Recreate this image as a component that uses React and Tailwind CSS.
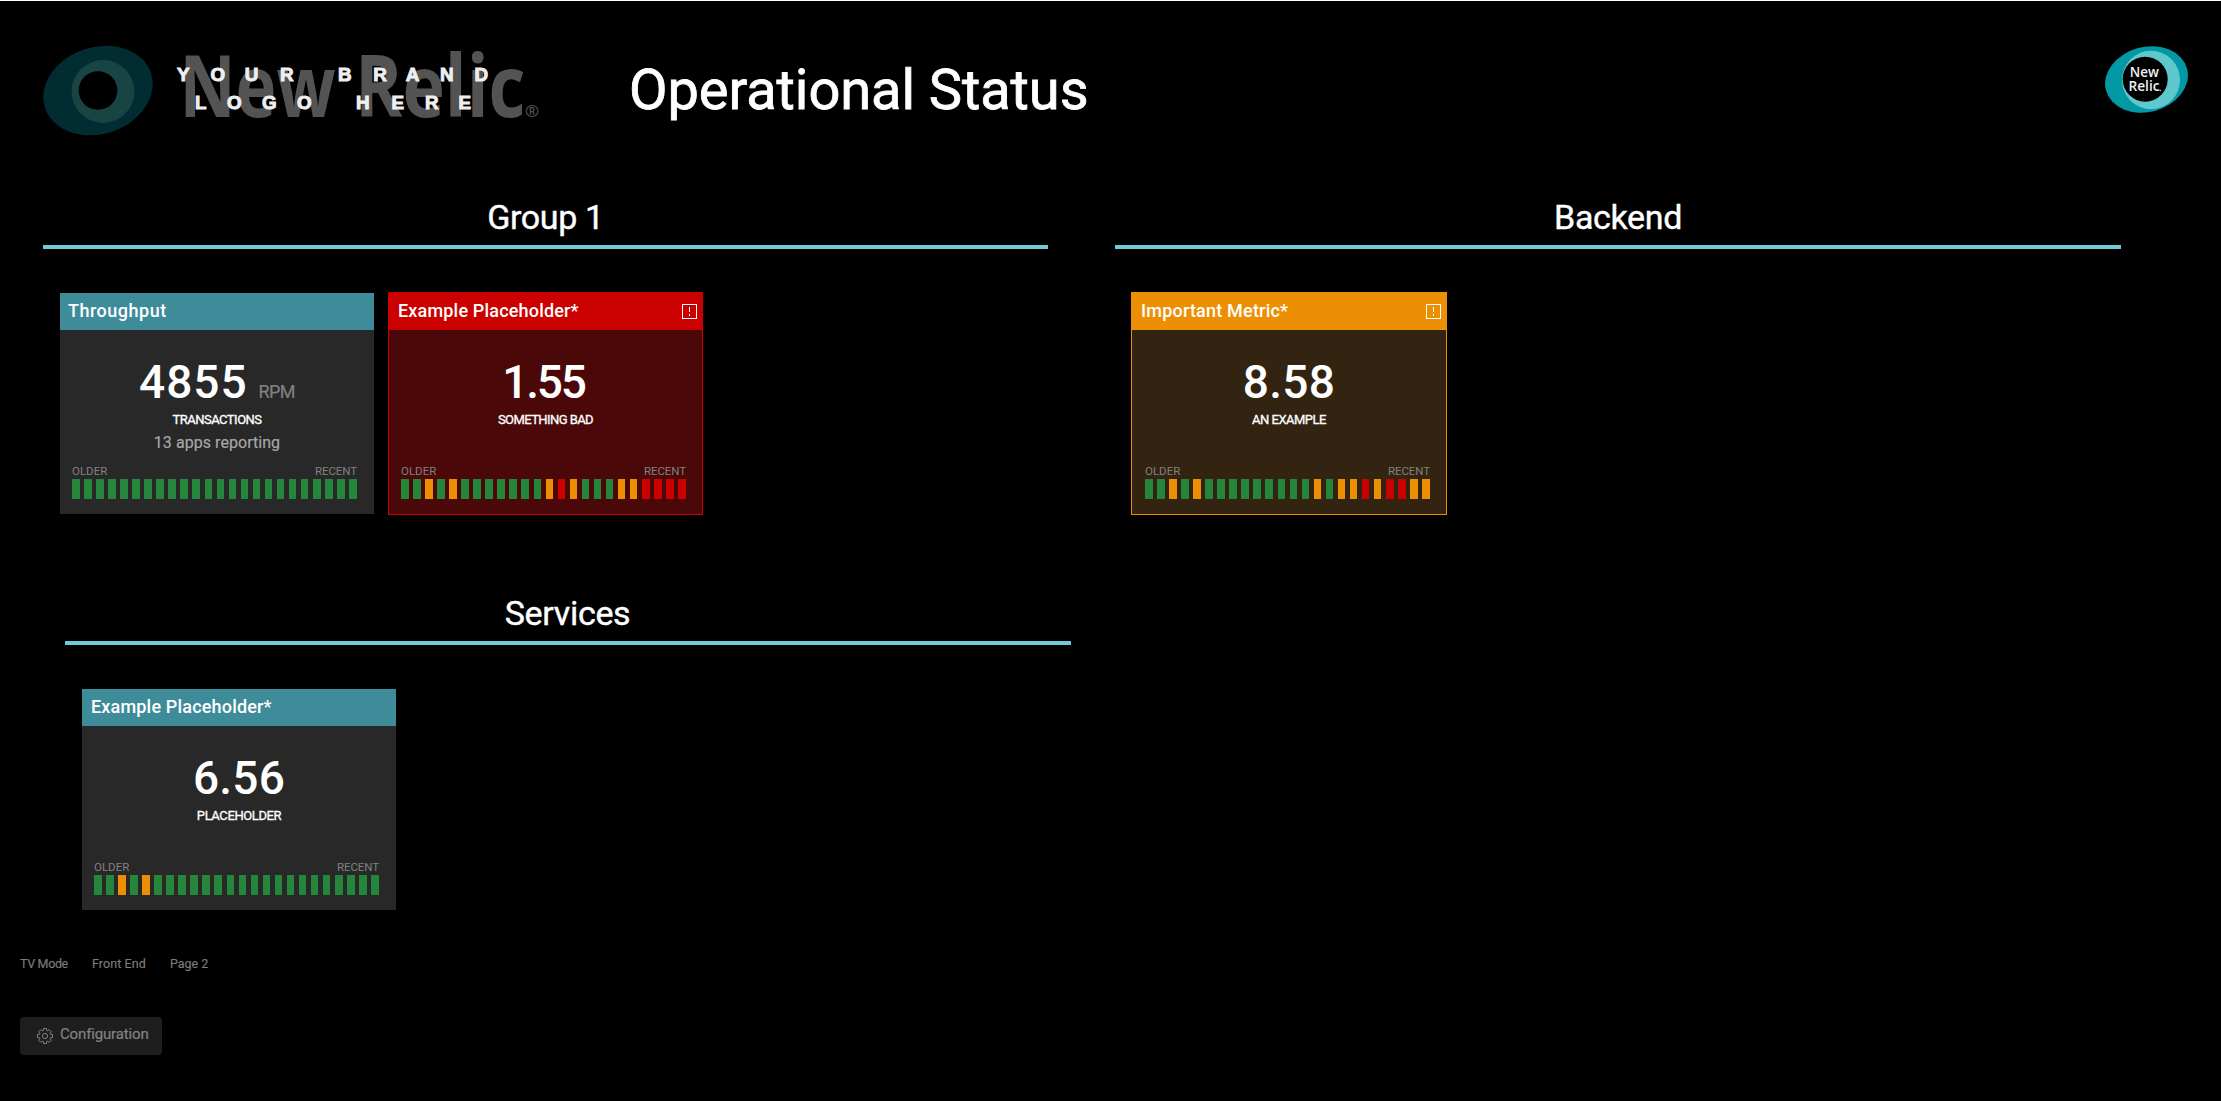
const COLORS = { g: '#23863b', o: '#ed8f04', r: '#cb0000' };

function Bars({ pattern }) {
  return (
    <div className="flex h-5 w-[285px] justify-between">
      {pattern.split('').map((c, i) => (
        <div key={i} className="h-full w-[7.6px]" style={{ backgroundColor: COLORS[c] }} />
      ))}
    </div>
  );
}

function Alert() {
  return (
    <svg width="15" height="15" viewBox="0 0 15 15" fill="none" stroke="#fff" shapeRendering="crispEdges">
      <rect x="0.5" y="0.5" width="14" height="14" />
      <path d="M7.5 3v5M7.5 10v2" />
    </svg>
  );
}

const TONES = {
  ok: { frame: 'w-[316px] border-transparent', head: 'bg-[#3e8c99]', body: 'bg-[#282828]', history: 'ml-3' },
  bad: { frame: 'w-[315px] border-[#cb0000]', head: 'bg-[#cb0000]', body: 'bg-[#4b0808]', history: 'ml-3' },
  warn: { frame: 'w-[316px] border-[#ed8f04]', head: 'bg-[#ed8f04]', body: 'bg-[#332411]', history: 'ml-[13px]' },
};

function Card({ tone, title, titleCls, value, valueCls, unit, label, labelCls, note, pattern }) {
  const t = TONES[tone];
  return (
    <div className={`flex h-[223px] flex-col border ${t.frame}`}>
      <div className={`flex h-[37px] shrink-0 items-center justify-between pr-[5px] ${t.head}`}>
        <span className={`mb-0.5 text-[18px] leading-[35px] font-medium whitespace-nowrap text-white ${titleCls}`}>{title}</span>
        {tone !== 'ok' && <Alert />}
      </div>
      <div className={`flex grow flex-col ${t.body}`}>
        <div className="mt-[27px] flex h-[50px] items-baseline justify-center gap-[11px] whitespace-nowrap">
          <span className={`text-[46px] leading-[50px] font-medium text-white ${valueCls}`}>{value}</span>
          {unit && <span className="text-[18px] tracking-[-0.6px] text-[#808080] [-webkit-text-stroke:0.2px_#808080]">{unit}</span>}
        </div>
        <div className={`mt-[5px] text-center text-[13px] leading-4 text-white [-webkit-text-stroke:0.3px_white] ${labelCls}`}>{label}</div>
        <div className="mt-[5px] h-5 text-center text-[16px] leading-5 tracking-[0.05px] text-[#a6a6a6] [-webkit-text-stroke:0.2px_#a6a6a6]">{note}</div>
        <div className={`mt-[7px] w-[285px] ${t.history}`}>
          <div className="flex h-[19px] justify-between text-[11.5px] leading-[23px] text-[#808080]">
            <span>OLDER</span>
            <span className="tracking-[-0.1px]">RECENT</span>
          </div>
          <Bars pattern={pattern} />
        </div>
      </div>
    </div>
  );
}

function Group({ title, titleCls, widthCls, children }) {
  return (
    <section className={widthCls}>
      <h2 className="h-[59px] border-b-4 border-[#70cbd4] text-center text-[34px] leading-[55px] font-normal text-white [-webkit-text-stroke:0.4px_white]">
        <span className={titleCls}>{title}</span>
      </h2>
      <div className="mt-[43px] ml-4 flex gap-[13px]">{children}</div>
    </section>
  );
}

function BrandLogo() {
  return (
    <svg width="586" height="120" viewBox="43 44 586 120" className="block">
      <ellipse cx="98" cy="90.6" rx="55.8" ry="43.4" fill="#012d32" transform="rotate(-18 98 90.6)" />
      <ellipse cx="103" cy="91.5" rx="31.4" ry="31.5" fill="#194444" />
      <circle cx="98" cy="90.5" r="19.3" fill="#000" />
      <g fill="#535353" fontFamily="Open Sans" fontWeight="700">
        <text x="179.5" y="116.6" fontSize="85.5" textLength="156" lengthAdjust="spacingAndGlyphs">New</text>
        <text x="355" y="116.6" fontSize="85.5" textLength="170.5" lengthAdjust="spacingAndGlyphs">Relic</text>
        <text x="525" y="116.5" fontSize="17" fontWeight="600">®</text>
      </g>
      <g fill="#efefef" stroke="#efefef" strokeWidth="1" fontFamily="Liberation Sans" fontWeight="700" fontSize="18.8">
        <text x="177 210.4 244.8 280 300 338 373.2 405.7 440 474.5" y="80.8">YOUR BRAND</text>
        <text x="195 227 262 297 320 356 391.5 425 458.5" y="109.3">LOGO HERE</text>
      </g>
    </svg>
  );
}

function RelicBadge() {
  return (
    <svg width="84" height="68" viewBox="2105 46 84 68" className="block">
      <ellipse cx="2146.5" cy="79.5" rx="42" ry="32.5" fill="#0399a4" transform="rotate(-15 2146.5 79.5)" />
      <ellipse cx="2151" cy="80" rx="29" ry="29.3" fill="#5fc8ce" />
      <circle cx="2145.2" cy="79.2" r="22.5" fill="#000" />
      <g fill="#f2f2f2" fontFamily="Open Sans" fontWeight="600">
        <text x="2129.8" y="77" fontSize="15.2" textLength="29" lengthAdjust="spacingAndGlyphs">New</text>
        <text x="2128.5" y="91" fontSize="15.2" textLength="31" lengthAdjust="spacingAndGlyphs">Relic</text>
        <text x="2159" y="91" fontSize="9">.</text>
      </g>
    </svg>
  );
}

function Gear() {
  return (
    <svg width="16" height="16" viewBox="0 0 16 16" fill="none" stroke="#828282" strokeWidth="1" className="block">
      <path d="M6.5.5h3v1.900l1.200.5 1.400-1.300 2.200 2.200-1.300 1.400.5 1.200h2v3.200h-2l-.5 1.200 1.300 1.400-2.200 2.200-1.400-1.300-1.200.5v1.900h-3v-1.900l-1.200-.5-1.400 1.300-2.200-2.200L3 10.800l-.5-1.200h-2V6.400h2L3 5.200 1.700 3.800l2.200-2.200 1.400 1.300 1.200-.5z" />
      <circle cx="8" cy="8" r="2.6" />
    </svg>
  );
}

export default function App() {
  return (
    <div className="flex h-[1101px] w-[2221px] flex-col overflow-hidden border-t border-white bg-black font-['Roboto',sans-serif]">
      <header className="flex h-[189px] shrink-0 items-start pr-8 pl-[43px]">
        <div className="mt-[43px]">
          <BrandLogo />
        </div>
        <h1 className="mt-14 text-[56px] leading-[66px] font-normal tracking-[-0.08px] whitespace-nowrap text-white [-webkit-text-stroke:0.8px_white]">
          Operational Status
        </h1>
        <div className="mt-[45px] ml-auto">
          <RelicBadge />
        </div>
      </header>

      <div className="flex gap-[67px] pl-[43px]">
        <Group title="Group 1" titleCls="tracking-[-0.35px]" widthCls="w-[1005px]">
          <Card tone="ok" title="Throughput" titleCls="pl-2 tracking-[0.5px]" value="4855" valueCls="tracking-[1px]" unit="RPM" label="TRANSACTIONS" labelCls="tracking-[-0.5px]" note="13 apps reporting" pattern="gggggggggggggggggggggggg" />
          <Card tone="bad" title="Example Placeholder*" titleCls="pl-[9px] tracking-[0.18px]" value="1.55" valueCls="-ml-1 tracking-[-2.2px]" label="SOMETHING BAD" labelCls="tracking-[-0.57px]" pattern="ggogogggggggorogggoorrrr" />
        </Group>
        <Group title="Backend" titleCls="tracking-[-0.35px]" widthCls="w-[1006px]">
          <Card tone="warn" title="Important Metric*" titleCls="pl-[9px] tracking-[0.2px]" value="8.58" valueCls="tracking-[0.3px]" label="AN EXAMPLE" labelCls="tracking-[-0.5px]" pattern="ggogogggggggggogoororroo" />
        </Group>
      </div>

      <div className="mt-[71px] pl-[65px]">
        <Group title="Services" titleCls="-ml-px tracking-[-0.3px]" widthCls="w-[1006px]">
          <Card tone="ok" title="Example Placeholder*" titleCls="pl-[9px] tracking-[0.18px]" value="6.56" valueCls="tracking-[0.2px]" label="PLACEHOLDER" labelCls="tracking-[-0.4px]" pattern="ggogoggggggggggggggggggg" />
        </Group>
      </div>

      <nav className="mt-[43px] flex gap-6 pl-5 text-[12.5px] leading-5 text-[#7c7c7c] [-webkit-text-stroke:0.15px_#7c7c7c]">
        <span className="tracking-[-0.35px]">TV Mode</span>
        <span className="tracking-[0.1px]">Front End</span>
        <span>Page 2</span>
      </nav>

      <button className="mt-[43px] ml-5 flex h-[38px] w-[142px] items-center gap-2 rounded bg-[#1e1e1e] pl-[17px] text-[#828282]">
        <Gear />
        <span className="mb-[5px] -ml-px text-[15px] leading-5 tracking-[-0.15px] [-webkit-text-stroke:0.2px_#828282]">Configuration</span>
      </button>
    </div>
  );
}
